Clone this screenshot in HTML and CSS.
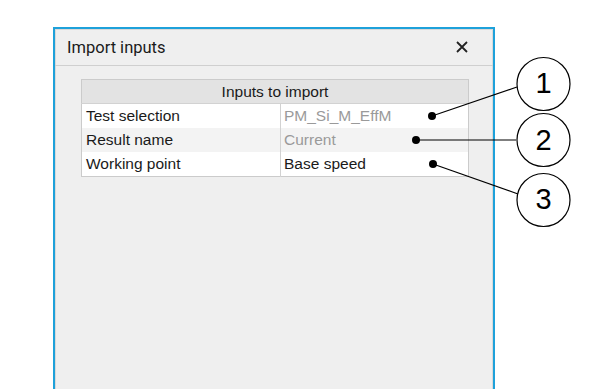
FILE: index.html
```html
<!DOCTYPE html>
<html lang="en">
<head>
    <meta charset="UTF-8">
    <title>Import inputs</title>
    <link rel="stylesheet" href="styles.css">
</head>
<body>
    <div class="dialog">
        <div class="dialog_title">
            <span>Import inputs</span>
            <svg class="close_btn" width="12" height="12" viewBox="0 0 12 12">
                <path d="M1 1 L11 11 M11 1 L1 11" stroke="#222" stroke-width="1.8" fill="none"/>
            </svg>
        </div>
        <div class="dialog_body">
            <table class="inputs_table">
                <tr><th colspan="2">Inputs to import</th></tr>
                <tr><td class="key">Test selection</td><td class="val dim">PM_Si_M_EffM</td></tr>
                <tr class="alt"><td class="key">Result name</td><td class="val dim">Current</td></tr>
                <tr><td class="key">Working point</td><td class="val">Base speed</td></tr>
            </table>
        </div>
    </div>

    <!-- callouts drawn over the dialog -->
    <svg class="callouts" width="600" height="389" viewBox="0 0 600 389">
        <g stroke="#000" stroke-width="1.2" fill="none">
            <line x1="432" y1="116" x2="517" y2="87"/>
            <line x1="416" y1="140" x2="516" y2="140"/>
            <line x1="433" y1="164" x2="518" y2="194"/>
            <circle cx="543.5" cy="84" r="26.5" fill="#fff"/>
            <circle cx="543.5" cy="140" r="26.5" fill="#fff"/>
            <circle cx="543.5" cy="200" r="26.5" fill="#fff"/>
        </g>
        <g fill="#000">
            <circle cx="432" cy="116" r="4"/>
            <circle cx="416" cy="140" r="4"/>
            <circle cx="433" cy="164" r="4"/>
        </g>
        <g class="callout_num" text-anchor="middle">
            <text x="543.5" y="93">1</text>
            <text x="543.5" y="149.5">2</text>
            <text x="543.5" y="208.5">3</text>
        </g>
    </svg>
</body>
</html>
```

FILE: styles.css
```css
body {
    margin: 0;
    background-color: #ffffff;
    font-family: "Liberation Sans", Arial, sans-serif;
    overflow: hidden;
}

.dialog {
    margin: 27px 0 0 53px;
    width: 438px;
    height: 400px;
    border: 2px solid #1ea1da;
    background-color: #efefef;
    box-shadow: inset 0 0 0 1px #d9d9d9;
}

.dialog_title {
    display: flex;
    align-items: center;
    justify-content: space-between;
    height: 36px;
    padding: 0 25px 0 12px;
    border-bottom: 1px solid #cfcfcf;
    font-family: Roboto, "Liberation Sans", sans-serif;
    font-size: 16.5px;
    color: #1a1a1a;
}

.close_btn {
    display: block;
}

.dialog_body {
    padding: 13px 0 0 26px;
}

.inputs_table {
    border-collapse: collapse;
    width: 388px;
    font-size: 15.5px;
    border: 1px solid #cbcbcb;
    background-color: #ffffff;
}

.inputs_table th {
    height: 23px;
    padding: 0;
    font-weight: normal;
    color: #1a1a1a;
    background-color: #e3e3e3;
    border-bottom: 1px solid #d2d2d2;
}

.inputs_table td {
    height: 24px;
    padding: 0 3px;
    color: #1a1a1a;
}

.inputs_table td.key {
    width: 191px;
    padding-left: 4px;
    border-right: 1px solid #d2d2d2;
}

.inputs_table tr.alt td {
    background-color: #f3f3f3;
}

.inputs_table td.dim {
    color: #9a9a9a;
}

.callouts {
    position: absolute;
    top: 0;
    left: 0;
}

.callout_num {
    font-family: "Liberation Sans", Arial, sans-serif;
    font-size: 29px;
}
```
